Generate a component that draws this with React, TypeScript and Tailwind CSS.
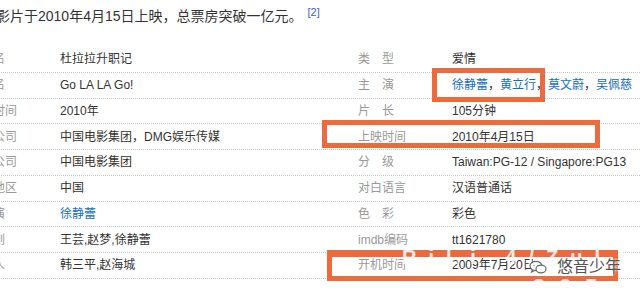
import React from "react";

type Row = {
  leftLabel: string;
  leftValue: React.ReactNode;
  rightLabel: string;
  rightValue: React.ReactNode;
};

const Link = ({ children }: { children: React.ReactNode }) => (
  <a className="text-[#136ec2] no-underline">{children}</a>
);

const rows: Row[] = [
  { leftLabel: "中文名", leftValue: "杜拉拉升职记", rightLabel: "类\u3000型", rightValue: "爱情" },
  {
    leftLabel: "外文名",
    leftValue: "Go LA LA Go!",
    rightLabel: "主\u3000演",
    rightValue: (
      <>
        <Link>徐静蕾</Link>，<Link>黄立行</Link>，<Link>莫文蔚</Link>，<Link>吴佩慈</Link>
      </>
    ),
  },
  { leftLabel: "出品时间", leftValue: "2010年", rightLabel: "片\u3000长", rightValue: "105分钟" },
  { leftLabel: "出品公司", leftValue: "中国电影集团，DMG娱乐传媒", rightLabel: "上映时间", rightValue: "2010年4月15日" },
  { leftLabel: "发行公司", leftValue: "中国电影集团", rightLabel: "分\u3000级", rightValue: "Taiwan:PG-12 / Singapore:PG13" },
  { leftLabel: "制片地区", leftValue: "中国", rightLabel: "对白语言", rightValue: "汉语普通话" },
  { leftLabel: "导\u3000演", leftValue: <Link>徐静蕾</Link>, rightLabel: "色\u3000彩", rightValue: "彩色" },
  { leftLabel: "编\u3000剧", leftValue: "王芸,赵梦,徐静蕾", rightLabel: "imdb编码", rightValue: "tt1621780" },
  { leftLabel: "制片人", leftValue: "韩三平,赵海城", rightLabel: "开机时间", rightValue: "2009年7月20日" },
];

function WatermarkIcon() {
  return (
    <svg width="18" height="15" viewBox="0 0 18 15" fill="none" stroke="#666" strokeWidth="1.2">
      <ellipse cx="7" cy="6" rx="6" ry="4.6" fill="white" />
      <path d="M3.5 9.6 L2.6 12 L5.6 10.4" fill="white" />
      <ellipse cx="12" cy="9" rx="5" ry="3.8" fill="white" />
      <circle cx="5" cy="5.5" r="0.6" fill="#666" stroke="none" />
      <circle cx="9" cy="5.5" r="0.6" fill="#666" stroke="none" />
    </svg>
  );
}

export default function App() {
  return (
    <div
      className="relative h-[299px] w-[640px] overflow-hidden bg-white text-[#333]"
      style={{ fontFamily: '"Liberation Sans", "Noto Sans CJK SC", sans-serif' }}
    >
      <p className="-ml-[4px] pt-[5px] text-[14px] leading-[22px] text-[#333] whitespace-nowrap">
        影片于2010年4月15日上映，总票房突破一亿元。
        <sup className="ml-[5px] text-[11px] text-[#3366cc]">[2]</sup>
      </p>

      <div className="-ml-[31px] mt-[20px] w-[671px] text-[12px]">
        {rows.map((r) => (
          <div
            key={r.leftLabel}
            className="grid h-[25.75px] grid-cols-[91px_298px_94px_1fr] items-center border-b border-dotted border-[#c8c8c8] whitespace-nowrap"
          >
            <span className="text-[#999]">{r.leftLabel}</span>
            <span>{r.leftValue}</span>
            <span className="text-[#999]">{r.rightLabel}</span>
            <span>{r.rightValue}</span>
          </div>
        ))}
      </div>

      {/* annotation boxes */}
      <div className="absolute left-[432px] top-[68px] h-[34px] w-[113px] border-[5px] border-[#ec6a3c]" />
      <div className="absolute left-[322px] top-[120px] h-[28px] w-[278px] border-[5px] border-[#ec6a3c]" />
      <div className="absolute left-[327px] top-[250px] h-[31px] w-[291px] border-[5px] border-t-[7px] border-[#ec6a3c]" />

      {/* watermark */}
      <div className="absolute left-[402px] top-[247px] text-[20px] font-bold tracking-[12px] text-white/85 whitespace-nowrap leading-none">
        RiLi 4/ZuLLw
      </div>
      <div className="absolute left-[420px] top-[276px] text-[22px] font-bold tracking-[14px] text-white/80 whitespace-nowrap leading-none">
        www.365.co
      </div>
      <div className="absolute left-[529px] top-[259px] flex items-center gap-[10px]">
        <WatermarkIcon />
        <span
          className="text-[16px] leading-none text-[#555]"
          style={{ textShadow: "0 0 2px #fff, 0 0 2px #fff" }}
        >
          悠音少年
        </span>
      </div>
    </div>
  );
}
